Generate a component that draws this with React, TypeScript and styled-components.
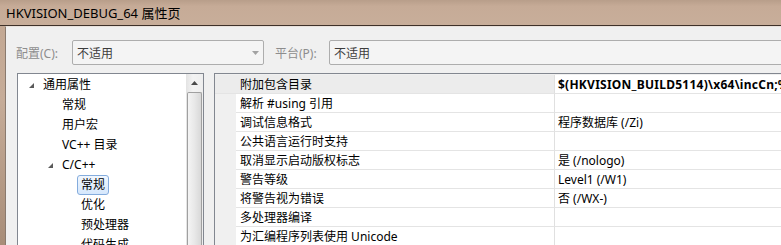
import styled, { createGlobalStyle } from "styled-components";

const UI_FONT = `"Noto Sans", "Noto Sans CJK SC", sans-serif`;

const GlobalStyle = createGlobalStyle`
  html, body {
    margin: 0;
    padding: 0;
    background: #c5ab97;
  }
  body {
    font-family: ${UI_FONT};
    font-size: 12px;
    color: #000;
  }
`;

const TREE_ITEMS = [
  { label: "通用属性", level: 0, expander: true },
  { label: "常规", level: 1 },
  { label: "用户宏", level: 1 },
  { label: "VC++ 目录", level: 1 },
  { label: "C/C++", level: 1, expander: true },
  { label: "常规", level: 2, selected: true },
  { label: "优化", level: 2 },
  { label: "预处理器", level: 2 },
  { label: "代码生成", level: 2 },
];

const GRID_ROWS = [
  {
    name: "附加包含目录",
    value: "$(HKVISION_BUILD5114)\\x64\\incCn;%(AdditionalIncludeDirectories)",
    bold: true,
    active: true,
  },
  { name: "解析 #using 引用", value: "" },
  { name: "调试信息格式", value: "程序数据库 (/Zi)" },
  { name: "公共语言运行时支持", value: "" },
  { name: "取消显示启动版权标志", value: "是 (/nologo)" },
  { name: "警告等级", value: "Level1 (/W1)" },
  { name: "将警告视为错误", value: "否 (/WX-)" },
  { name: "多处理器编译", value: "" },
  { name: "为汇编程序列表使用 Unicode", value: "" },
];

const Window = styled.div`
  width: 781px;
  height: 245px;
  overflow: hidden;
  display: flex;
  flex-direction: column;
  background: linear-gradient(180deg, #c2a792 0%, #c6ac98 40%, #a88d78 100%);
`;

const TitleBar = styled.div`
  height: 25px;
  flex: none;
  display: flex;
  align-items: center;
  padding-left: 6px;
  font-size: 13px;
  color: #000;
  background: linear-gradient(180deg, #b89e8a 0%, #c6ab97 25%, #c8ae9a 100%);
  border-bottom: 1px solid #3e3129;
`;

const Frame = styled.div`
  flex: 1;
  display: flex;
  padding-left: 5px;
`;

const Body = styled.div`
  flex: 1;
  background: #f0f0f0;
  border-left: 1px solid #8a7a6e;
  border-top: 1px solid #e9e2dc;
  padding: 13px 0 0 10px;
  display: flex;
  flex-direction: column;
  gap: 8px;
  min-width: 0;
`;

const ConfigRow = styled.div`
  display: flex;
  align-items: center;
  height: 25px;
`;

const FieldLabel = styled.span<{ $width: number }>`
  width: ${(p) => p.$width}px;
  flex: none;
  color: #8d8d8d;
`;

const Combo = styled.div<{ $width?: number }>`
  box-sizing: border-box;
  height: 25px;
  width: ${(p) => (p.$width ? `${p.$width}px` : "auto")};
  flex: ${(p) => (p.$width ? "none" : "1 0 auto")};
  margin-right: ${(p) => (p.$width ? "11px" : "-4px")};
  border: 1px solid #adadad;
  border-radius: 2px;
  background: #f4f4f4;
  color: #3c3c3c;
  display: flex;
  align-items: center;
  justify-content: space-between;
  padding: 0 4px 0 4px;
`;

const Panels = styled.div`
  display: flex;
  gap: 10px;
  flex: 1;
  padding-left: 1px;
`;

const TreePanel = styled.div`
  box-sizing: border-box;
  width: 187px;
  flex: none;
  border: 1px solid #828790;
  border-bottom: none;
  background: #fff;
  display: flex;
`;

const TreeList = styled.div`
  flex: 1;
  padding-top: 1px;
`;

const TreeRow = styled.div<{ $level: number }>`
  height: 20px;
  display: flex;
  align-items: center;
  padding-left: ${(p) => 11 + p.$level * 19}px;
  white-space: nowrap;
`;

const Expander = styled.span`
  width: 14px;
  flex: none;
  display: flex;
  align-items: center;
  padding-top: 1px;
`;

const TreeText = styled.span<{ $selected?: boolean }>`
  box-sizing: border-box;
  height: 20px;
  line-height: 18px;
  padding: 0 3px;
  margin-left: -4px;
  border: 1px solid ${(p) => (p.$selected ? "#84acdd" : "transparent")};
  border-radius: 3px;
  background: ${(p) =>
    p.$selected ? "linear-gradient(180deg, #f1f7fe 0%, #d5e7fc 100%)" : "transparent"};
`;

const ScrollBar = styled.div`
  width: 17px;
  flex: none;
  background: linear-gradient(90deg, #e3e3e3 0%, #f3f3f3 40%, #eeeeee 100%);
  display: flex;
  flex-direction: column;
  align-items: center;
`;

const ScrollArrow = styled.div`
  height: 18px;
  display: flex;
  align-items: center;
  justify-content: center;
`;

const ScrollThumb = styled.div`
  box-sizing: border-box;
  width: 15px;
  flex: 1;
  border: 1px solid #a0a0a0;
  border-bottom: none;
  border-radius: 2px 2px 0 0;
  background: linear-gradient(90deg, #f4f4f4 0%, #e8e8e8 50%, #d8d8d8 100%);
`;

const GridPanel = styled.div`
  flex: 1;
  border: 1px solid #828790;
  border-right: none;
  border-bottom: none;
  background: #f0f0f0;
  padding-top: 1px;
  min-width: 0;
  overflow: hidden;
`;

const GridRow = styled.div`
  display: flex;
  height: 19px;
`;

const NameCell = styled.div<{ $active?: boolean }>`
  box-sizing: border-box;
  flex: none;
  width: ${(p) => (p.$active ? "340px" : "319px")};
  margin-left: ${(p) => (p.$active ? "0" : "21px")};
  padding-left: ${(p) => (p.$active ? "25px" : "4px")};
  background: ${(p) => (p.$active ? "#ececec" : "#fff")};
  border-bottom: 1px solid #e4e4e4;
  border-right: 1px solid #e0e0e0;
  display: flex;
  align-items: center;
  white-space: nowrap;
`;

const ValueCell = styled.div<{ $bold?: boolean }>`
  flex: 1;
  background: #fff;
  border-bottom: 1px solid #e4e4e4;
  padding-left: 3px;
  display: flex;
  align-items: center;
  white-space: nowrap;
  overflow: hidden;
  font-weight: ${(p) => (p.$bold ? 700 : 400)};
  letter-spacing: ${(p) => (p.$bold ? "0.25px" : "0")};
`;

function TreeGlyph() {
  return (
    <svg width="6" height="6" viewBox="0 0 6 6">
      <polygon points="5,0 5,5 0,5" fill="#5a5a5a" />
    </svg>
  );
}

export default function App() {
  return (
    <>
      <GlobalStyle />
      <Window>
        <TitleBar>HKVISION_DEBUG_64 属性页</TitleBar>
        <Frame>
          <Body>
            <ConfigRow>
              <FieldLabel $width={56}>配置(C):</FieldLabel>
              <Combo $width={192}>
                <span>不适用</span>
                <svg width="7" height="4" viewBox="0 0 7 4">
                  <polygon points="0,0 7,0 3.5,4" fill="#a2a2a2" />
                </svg>
              </Combo>
              <FieldLabel $width={54}>平台(P):</FieldLabel>
              <Combo>
                <span>不适用</span>
              </Combo>
            </ConfigRow>
            <Panels>
              <TreePanel>
                <TreeList>
                  {TREE_ITEMS.map((item, i) => (
                    <TreeRow key={i} $level={item.level}>
                      <Expander>{item.expander && <TreeGlyph />}</Expander>
                      <TreeText $selected={item.selected}>{item.label}</TreeText>
                    </TreeRow>
                  ))}
                </TreeList>
                <ScrollBar>
                  <ScrollArrow>
                    <svg width="7" height="4" viewBox="0 0 7 4">
                      <polygon points="0,4 7,4 3.5,0" fill="#4a4a4a" />
                    </svg>
                  </ScrollArrow>
                  <ScrollThumb />
                </ScrollBar>
              </TreePanel>
              <GridPanel>
                {GRID_ROWS.map((row, i) => (
                  <GridRow key={i}>
                    <NameCell $active={row.active}>{row.name}</NameCell>
                    <ValueCell $bold={row.bold}>{row.value}</ValueCell>
                  </GridRow>
                ))}
              </GridPanel>
            </Panels>
          </Body>
        </Frame>
      </Window>
    </>
  );
}
